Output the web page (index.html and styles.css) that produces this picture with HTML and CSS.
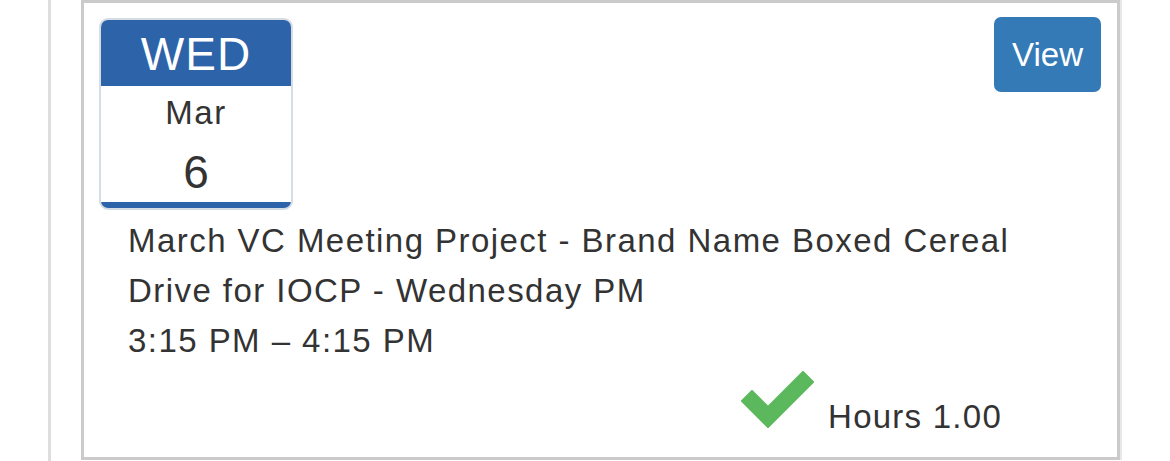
FILE: index.html
```html
<!DOCTYPE html>
<html lang="en">
<head>
    <meta charset="UTF-8">
    <meta name="viewport" content="width=device-width, initial-scale=1.0">
    <title>Volunteer Shift</title>
    <link rel="stylesheet" href="styles.css">
</head>
<body>
    <div class="page">
        <div class="rail"></div>

        <!-- One shift card -->
        <div class="shift-card">
            <div class="shift-top">
                <div class="cal">
                    <div class="cal-day">WED</div>
                    <div class="cal-body">
                        <div class="cal-month">Mar</div>
                        <div class="cal-date">6</div>
                    </div>
                    <div class="cal-foot"></div>
                </div>
                <button class="btn-view" type="button">View</button>
            </div>

            <div class="shift-info">
                <div>March VC Meeting Project - Brand Name Boxed Cereal Drive for IOCP - Wednesday PM</div>
                <div>3:15 PM &ndash; 4:15 PM</div>
            </div>

            <div class="shift-hours">
                <svg class="check" width="80" height="61" viewBox="0 0 80 61">
                    <polygon points="6,34 32,60 77,15 67,5 32,40 16,24" fill="#5cb85c" stroke="#5cb85c" stroke-width="2" stroke-linejoin="round"/>
                </svg>
                <span>Hours 1.00</span>
            </div>
        </div>
    </div>
</body>
</html>
```

FILE: styles.css
```css
body {
    font-family: "Liberation Sans", Arial, sans-serif;
    background-color: #fff;
    color: #333;
    margin: 0;
    padding: 0;
}
.page {
    display: flex;
    height: 461px;
    overflow: hidden;
}
.rail {
    width: 3px;
    margin-left: 48px;
    background: #dedede;
}
.shift-card {
    margin-left: 30px;
    width: 1033px;
    height: 454px;
    border: 3px solid #cbcbcb;
    box-shadow: 2px 0 0 #e8e8e8;
    padding: 0;
}
.shift-top {
    display: flex;
    justify-content: space-between;
    align-items: flex-start;
    padding: 15px 16px 0 15px;
}
.cal {
    width: 190px;
    height: 188px;
    border: 2px solid #d6dce4;
    border-radius: 9px;
    overflow: hidden;
    display: flex;
    flex-direction: column;
    text-align: center;
}
.cal-day {
    background: #2c63a9;
    color: #fff;
    height: 66px;
    line-height: 68px;
    font-size: 46px;
    letter-spacing: 1px;
}
.cal-body {
    flex: 1;
    padding-top: 7px;
}
.cal-month {
    font-size: 33px;
    letter-spacing: 1.5px;
    line-height: 40px;
}
.cal-date {
    font-size: 46px;
    line-height: 50px;
    margin-top: 14px;
}
.cal-foot {
    height: 6px;
    background: #2c63a9;
}
.btn-view {
    width: 107px;
    height: 75px;
    margin-top: -1px;
    background-color: #337ab7;
    color: #fff;
    border: none;
    border-radius: 7px;
    font-family: inherit;
    font-size: 33px;
    padding: 0;
    cursor: pointer;
}
.shift-info {
    padding: 6px 60px 0 44px;
    font-size: 33px;
    letter-spacing: 1.45px;
    line-height: 50px;
}
.shift-hours {
    display: flex;
    justify-content: flex-end;
    align-items: baseline;
    gap: 12px;
    margin-top: 1px;
    padding-right: 115px;
    font-size: 33px;
    letter-spacing: 1.25px;
}
.check {
    display: block;
}
```
